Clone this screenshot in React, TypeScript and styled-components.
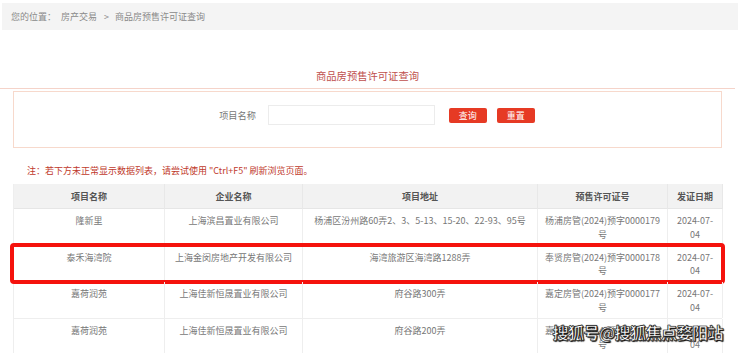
import styled, { createGlobalStyle } from "styled-components";

type Row = {
  name: string;
  company: string;
  address: string;
  permit: string;
  date: string;
  marked?: boolean;
};

const rows: Row[] = [
  { name: "隆新里", company: "上海滨昌置业有限公司", address: "杨浦区汾州路60弄2、3、5-13、15-20、22-93、95号", permit: "杨浦房管(2024)预字0000179号", date: "2024-07-04" },
  { name: "泰禾海湾院", company: "上海金闵房地产开发有限公司", address: "海湾旅游区海湾路1288弄", permit: "奉贤房管(2024)预字0000178号", date: "2024-07-04", marked: true },
  { name: "嘉荷润苑", company: "上海佳新恒晟置业有限公司", address: "府谷路300弄", permit: "嘉定房管(2024)预字0000177号", date: "2024-07-04" },
  { name: "嘉荷润苑", company: "上海佳新恒晟置业有限公司", address: "府谷路200弄", permit: "嘉定房管(2024)预字0000176号", date: "2024-07-04" },
];

const GlobalStyle = createGlobalStyle`
  body {
    margin: 0;
    background: #fff;
    font-family: "Noto Sans CJK SC", "Noto Sans", sans-serif;
    overflow: hidden;
  }
`;

export default function App() {
  return (
    <Page>
      <GlobalStyle />
      <Breadcrumb>
        <span>您的位置：</span>
        <span>房产交易</span>
        <span className="sep">&gt;</span>
        <span>商品房预售许可证查询</span>
      </Breadcrumb>
      <Content>
        <Title>商品房预售许可证查询</Title>
        <SearchBox>
          <label>项目名称</label>
          <SearchInput />
          <RedButton>查询</RedButton>
          <RedButton>重置</RedButton>
        </SearchBox>
        <Notice>注：若下方未正常显示数据列表，请尝试使用 "Ctrl+F5" 刷新浏览页面。</Notice>
        <Table>
          <HeaderRow>
            <Cell>项目名称</Cell>
            <Cell>企业名称</Cell>
            <Cell>项目地址</Cell>
            <Cell>预售许可证号</Cell>
            <Cell>发证日期</Cell>
          </HeaderRow>
          {rows.map((r, i) => (
            <BodyRow key={i} $marked={r.marked}>
              <Cell>{r.name}</Cell>
              <Cell>{r.company}</Cell>
              <Cell>{r.address}</Cell>
              <Cell>{r.permit}</Cell>
              <Cell>{r.date}</Cell>
            </BodyRow>
          ))}
        </Table>
      </Content>
      <Watermark>搜狐号@搜狐焦点婺阳站</Watermark>
    </Page>
  );
}

const Page = styled.div`
  position: relative;
  width: 740px;
  height: 353px;
  overflow: hidden;
`;

const Breadcrumb = styled.div`
  margin: 3px 2px 0 2px;
  height: 27px;
  background: #f4f4f4;
  display: flex;
  align-items: center;
  gap: 6px;
  padding-left: 9px;
  font-size: 9px;
  color: #8a8a8a;

  span:first-child {
    margin-right: -1px;
  }

  .sep {
    margin: 0 0 0 1px;
  }
`;

const Content = styled.div`
  margin-left: 13px;
  width: 709px;
`;

const Title = styled.div`
  margin: 39px -13px 0 -13px;
  padding-bottom: 5px;
  line-height: 14px;
  text-align: center;
  font-size: 10.3px;
  color: #c0504d;
  border-bottom: 1px solid #f5d3c9;
`;

const SearchBox = styled.div`
  margin-top: 2px;
  height: 57px;
  box-sizing: border-box;
  border: 1px solid #f7d9cc;
  display: flex;
  align-items: flex-start;
  justify-content: center;
  padding: 13px 0 0 19px;

  label {
    font-size: 9.2px;
    color: #777;
    line-height: 20px;
    margin-right: 12px;
  }
`;

const SearchInput = styled.div`
  width: 167px;
  height: 20px;
  box-sizing: border-box;
  border: 1px solid #ececec;
  background: #fff;
  margin-right: 14px;
`;

const RedButton = styled.div`
  width: 38px;
  height: 15px;
  margin-top: 3px;
  margin-right: 10px;
  border-radius: 2px;
  background: #e63a24;
  color: #fff;
  font-size: 9px;
  line-height: 15px;
  text-align: center;

  &:last-child {
    margin-right: 0;
  }
`;

const Notice = styled.div`
  margin-top: 16px;
  padding-left: 14px;
  line-height: 14px;
  font-size: 9px;
  color: #c0392b;
`;

const Table = styled.div`
  margin-top: 6px;
  border-left: 1px solid #eee;
`;

const columns = "151px 138px 235px 130px 55px";

const HeaderRow = styled.div`
  display: grid;
  grid-template-columns: ${columns};
  height: 25px;
  background: #f2f2f2;
  border-bottom: 1px solid #e6e6e6;
  box-sizing: border-box;
  font-weight: bold;
  color: #555;

  & > div {
    line-height: 25px;
    padding-top: 0;
    border-right: 1px solid #e8e8e8;
  }
`;

const BodyRow = styled.div<{ $marked?: boolean }>`
  position: relative;
  display: grid;
  grid-template-columns: ${columns};
  height: 36.7px;
  box-sizing: border-box;
  border-bottom: 1px solid #eee;
  color: #777;

  &::after {
    content: "";
    display: ${(p) => (p.$marked ? "block" : "none")};
    position: absolute;
    top: -3px;
    bottom: -3px;
    left: -4px;
    right: -3px;
    border: 4px solid #f5120d;
    border-radius: 4px;
  }
`;

const Cell = styled.div`
  box-sizing: border-box;
  font-size: 9px;
  line-height: 13.5px;
  padding: 5px 6px 0;
  text-align: center;
  border-right: 1px solid #eee;
  overflow-wrap: anywhere;
`;

const Watermark = styled.div`
  position: absolute;
  right: 17px;
  bottom: 9px;
  font-size: 16px;
  font-weight: bold;
  color: #fff;
  letter-spacing: -0.5px;
  -webkit-text-stroke: 0.6px #222;
  text-shadow: 0 0 1px #000, 1px 1px 1px #000;
`;
